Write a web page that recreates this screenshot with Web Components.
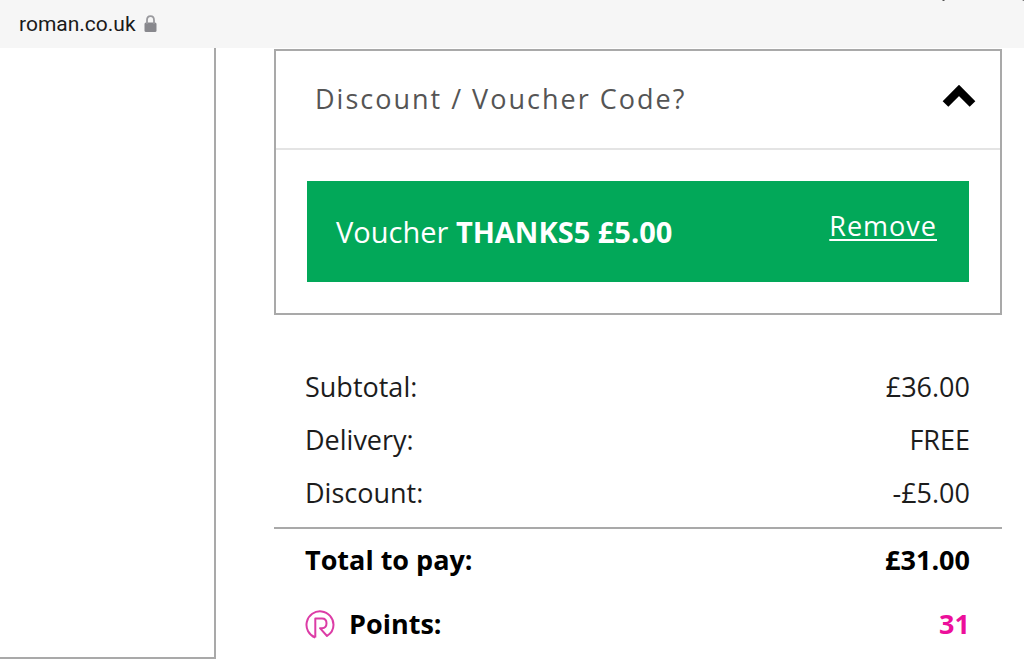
<!DOCTYPE html>
<html lang="en">
<head>
<meta charset="utf-8">
<meta name="viewport" content="width=device-width, initial-scale=1">
<title>Roman - Basket</title>
<style>
body { margin: 0; background: #fff; color: #1c1c1c; font-family: "Open Sans", "Noto Sans", sans-serif; font-size: 27px; line-height: 36px; }
</style>
</head>
<body>
<checkout-page>
  <address-bar slot="bar">roman.co.uk</address-bar>
  <side-panel slot="side"></side-panel>
  <voucher-card heading="Discount / Voucher Code?">
    <voucher-applied>Voucher <b>THANKS5 £5.00</b></voucher-applied>
  </voucher-card>
  <order-totals>
    <total-row>Subtotal:<span slot="value">£36.00</span></total-row>
    <total-row>Delivery:<span slot="value">FREE</span></total-row>
    <total-row>Discount:<span slot="value">-£5.00</span></total-row>
    <total-row kind="total" slot="final">Total to pay:<span slot="value">£31.00</span></total-row>
    <total-row kind="points" slot="final"><points-mark></points-mark>Points:<span slot="value">31</span></total-row>
  </order-totals>
</checkout-page>
<script>
const define = (name, html, setup) => customElements.define(name, class extends HTMLElement {
  constructor() {
    super();
    this.attachShadow({ mode: "open" }).innerHTML = html;
  }
  connectedCallback() { if (setup) setup(this, this.shadowRoot); }
});

define("checkout-page", `
<style>
:host { display: block; }
.columns { display: grid; grid-template-columns: 216px minmax(0, 1fr); align-items: start; }
main { padding: 1px 22px 0 58px; }
</style>
<slot name="bar"></slot>
<div class="columns"><slot name="side"></slot><main><slot></slot></main></div>`);

define("address-bar", `
<style>
:host { display: block; position: relative; background: #f6f6f6; color: #1a1a1a; font: 21px/24px Roboto, "Liberation Sans", sans-serif; }
header { display: flex; align-items: center; gap: 8px; padding: 12px 19px; }
.lock { width: 13px; height: 18px; }
.edge { position: absolute; top: 0; right: 0; width: 82px; height: 2px; }
</style>
<header>
  <span><slot></slot></span>
  <svg class="lock" viewBox="0 0 13 18" role="img" aria-label="Secure"><rect x=".5" y="7.500" width="12" height="9.500" rx="1.500" fill="#88888d"/><path d="M3 9V5C3 2.500 4.500 1.200 6.500 1.200S10 2.500 10 5V9" fill="none" stroke="#9a9a9e" stroke-width="1.800"/></svg>
</header>
<svg class="edge" viewBox="0 0 82 2" aria-hidden="true"><path d="M0 0h3L2 1H1zM80 0h2v1z" fill="#555"/></svg>`);

define("side-panel", `
<style>
:host { display: block; box-sizing: border-box; height: calc(100vh - 57px); border: solid #a9a9a9; border-width: 0 2px 2px 0; }
</style>`);

define("voucher-card", `
<style>
:host { display: block; border: 2px solid #a9a9a9; }
h2 { margin: 0; font: inherit; border-bottom: 2px solid #e4e4e4; }
button { display: flex; align-items: center; justify-content: space-between; width: 100%; padding: 30px 24px 31px 39px; border: 0; background: none; color: #555; font: inherit; letter-spacing: 2px; text-align: left; cursor: pointer; }
svg { width: 34px; height: 24px; margin-bottom: 6px; }
.body { padding: 31px; }
</style>
<h2><button type="button" aria-expanded="true"><span></span><svg viewBox="0 0 34 24" aria-hidden="true"><path d="M3.500 20L17 6.500 30.500 20" fill="none" stroke="#000" stroke-width="8"/></svg></button></h2>
<div class="body"><slot></slot></div>`, (host, root) => {
  const button = root.querySelector("button"), body = root.querySelector(".body");
  root.querySelector("span").textContent = host.getAttribute("heading");
  button.onclick = () => {
    body.hidden = !body.hidden;
    button.setAttribute("aria-expanded", String(!body.hidden));
  };
});

define("voucher-applied", `
<style>
:host { display: flex; justify-content: space-between; align-items: flex-start; padding: 27px 32px 30px 29px; background: #02a859; color: #fff; }
.text { padding-top: 4px; font-size: 29px; line-height: 40px; }
a { color: inherit; letter-spacing: 1px; text-decoration: underline; text-decoration-thickness: 2px; text-underline-offset: 3px; }
</style>
<span class="text"><slot></slot></span><a href="#remove">Remove</a>`);

define("order-totals", `
<style>
:host { display: block; padding-top: 46px; }
.lines { padding-bottom: 7px; border-bottom: 2px solid #a9a9a9; }
</style>
<div class="lines"><slot></slot></div>
<slot name="final"></slot>`);

define("total-row", `
<style>
:host { display: block; }
dl { display: flex; justify-content: space-between; margin: 0; padding: 8px 32px 9px 31px; }
dt { display: flex; align-items: center; }
dd { margin: 0; }
:host([kind]) { color: #000; font-weight: 700; }
:host([kind]) dl { padding-top: 13px; padding-bottom: 15px; }
:host([kind="points"]) dd { color: #ec0f9b; }
</style>
<dl><dt><slot></slot></dt><dd><slot name="value"></slot></dd></dl>`);

define("points-mark", `
<style>
:host { display: block; width: 30px; height: 30px; margin-right: 14px; }
svg { display: block; }
</style>
<svg width="30" height="30" viewBox="0 0 30 30" fill="none" stroke="#dc3ca6" stroke-width="2" stroke-linejoin="round" aria-hidden="true"><path d="M10.300 28.500V9.500H17C20 9.500 21.500 11.500 21.500 14.200S20 19 17 19.200H15L22 27C26 24.500 28.500 20.500 28.500 15.800A13.500 13.500 0 1 0 10.300 28.500"/></svg>`);
</script>
</body>
</html>
